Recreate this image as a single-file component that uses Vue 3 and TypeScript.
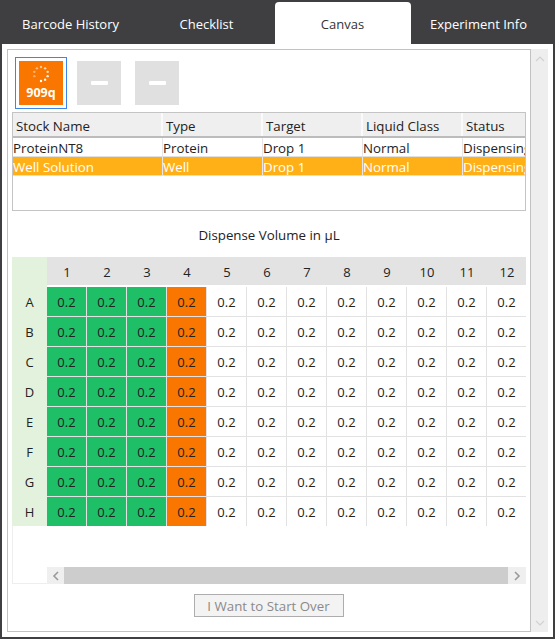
<script setup lang="ts">
const tabs = ['Barcode History', 'Checklist', 'Canvas', 'Experiment Info']
const columns = ['Stock Name', 'Type', 'Target', 'Liquid Class', 'Status']
const rows = [
  { cells: ['ProteinNT8', 'Protein', 'Drop 1', 'Normal', 'Dispensing'], selected: false },
  { cells: ['Well Solution', 'Well', 'Drop 1', 'Normal', 'Dispensing'], selected: true },
]
const gridCols = Array.from({ length: 12 }, (_, i) => i + 1)
const gridRows = ['A', 'B', 'C', 'D', 'E', 'F', 'G', 'H']
const opacities = [0.6, 0.7, 0.8, 0.9, 1, 1, 0, 0.4, 0.45, 0.5]
const dots = opacities.map((o, i) => {
  const a = (i / 10) * Math.PI * 2 - Math.PI / 2
  return { x: 22 + 7 * Math.cos(a), y: 13 + 7 * Math.sin(a), o }
})
function cellClass(c: number): string {
  if (c <= 3) return 'green'
  if (c === 4) return 'orange'
  return ''
}
</script>

<template>
  <div class="window">
    <nav class="tabs">
      <div v-for="t in tabs" :key="t" class="tab" :class="{ active: t === 'Canvas' }">{{ t }}</div>
    </nav>
    <div class="content">
      <section class="panel">
        <div class="toolbar">
          <div class="tool selected">
            <div class="tile orange-tile">
              <svg class="spinner" viewBox="0 0 44 44" width="44" height="44">
                <circle v-for="(d, i) in dots" :key="i" :cx="d.x" :cy="d.y" r="1.2" fill="#fff" :opacity="d.o" />
              </svg>
              <span class="tile-text">909q</span>
            </div>
          </div>
          <div class="tool"><div class="tile grey-tile"><i class="dash"></i></div></div>
          <div class="tool"><div class="tile grey-tile"><i class="dash"></i></div></div>
        </div>

        <div class="table">
          <div class="thead">
            <div v-for="c in columns" :key="c" class="th">{{ c }}</div>
          </div>
          <div v-for="r in rows" :key="r.cells[0]" class="tr" :class="{ sel: r.selected }">
            <div v-for="(c, i) in r.cells" :key="i" class="td">{{ c }}</div>
          </div>
        </div>

        <h2 class="title">Dispense Volume in µL</h2>

        <div class="plate">
          <div class="plate-grid">
            <div class="corner"></div>
            <div v-for="c in gridCols" :key="c" class="col-head">{{ c }}</div>
            <template v-for="r in gridRows" :key="r">
              <div class="row-head">{{ r }}</div>
              <div v-for="c in gridCols" :key="c" class="cell" :class="cellClass(c)">0.2</div>
            </template>
          </div>
          <div class="plate-foot">
            <div class="hscroll">
              <span class="arrow">
                <svg width="8" height="10" viewBox="0 0 8 10"><path d="M6 1 2 5l4 4" fill="none" stroke="#9a9a9a" stroke-width="1.6" /></svg>
              </span>
              <span class="thumb"></span>
              <span class="arrow">
                <svg width="8" height="10" viewBox="0 0 8 10"><path d="M2 1l4 4-4 4" fill="none" stroke="#9a9a9a" stroke-width="1.6" /></svg>
              </span>
            </div>
          </div>
        </div>

        <div class="actions">
          <button class="start" type="button" disabled>I Want to Start Over</button>
        </div>
      </section>
      <aside class="vscroll">
        <svg width="10" height="8" viewBox="0 0 10 8"><path d="M1 6l4-4 4 4" fill="none" stroke="#d2d2d2" stroke-width="1.2" /></svg>
        <svg width="10" height="8" viewBox="0 0 10 8"><path d="M1 2l4 4 4-4" fill="none" stroke="#d2d2d2" stroke-width="1.2" /></svg>
      </aside>
    </div>
  </div>
</template>

<style>
html, body { margin: 0; padding: 0; background: #3f3f41; }
</style>

<style scoped>
* { box-sizing: border-box; }
.window {
  width: 555px;
  height: 639px;
  background: #3f3f41;
  font-family: "Open Sans", "Noto Sans", sans-serif;
  font-size: 13px;
  color: #222;
  overflow: hidden;
}
.tabs {
  display: flex;
  height: 44px;
  padding: 2px 0 0 3px;
}
.tab {
  width: 136px;
  display: flex;
  align-items: center;
  justify-content: center;
  color: #fff;
  padding: 2px 1px 0 0;
}
.tab.active {
  background: #fff;
  color: #333;
  border-radius: 4px 4px 0 0;
}
.content {
  display: flex;
  align-items: flex-start;
  width: 551px;
  height: 593px;
  margin-left: 2px;
  padding: 5px;
  background: #fff;
}
.panel {
  width: 524px;
  height: 583px;
  border: 1px solid #c2c2c2;
  padding: 7px 4px 0;
  display: flex;
  flex-direction: column;
}
.vscroll {
  width: 17px;
  height: 583px;
  background: #eeeeee;
  display: flex;
  flex-direction: column;
  justify-content: space-between;
  align-items: center;
  padding: 6px 0 5px;
}
.toolbar {
  display: flex;
  gap: 6px;
  padding-left: 3px;
  margin-bottom: 3px;
}
.tool {
  width: 52px;
  height: 52px;
  padding: 3px;
  border: 1px solid transparent;
}
.tool.selected { border-color: #3b86e8; }
.tile {
  position: relative;
  width: 44px;
  height: 44px;
  display: flex;
  align-items: center;
  justify-content: center;
}
.orange-tile { background: #f97600; }
.grey-tile { background: #e0e0e0; }
.spinner { position: absolute; inset: 0; }
.tile-text {
  position: absolute;
  left: 0;
  right: 0;
  bottom: 4px;
  text-align: center;
  color: #fff;
  font-weight: 700;
  font-size: 12.5px;
  line-height: 16px;
}
.dash {
  display: block;
  width: 17px;
  height: 4px;
  background: #fff;
  border-radius: 1px;
}
.table {
  width: 514px;
  height: 99px;
  border: 1px solid #c4c4c4;
  overflow: hidden;
  flex: none;
  font-size: 13.3px;
}
.thead {
  display: flex;
  height: 25px;
  background: #efefef;
  border-bottom: 2px solid #bcbcbc;
}
.th {
  flex: none;
  width: 100px;
  padding: 1px 3px 0;
  border-right: 2px solid #fafafa;
  line-height: 25px;
  white-space: nowrap;
}
.th:first-child, .td:first-child { width: 150px; }
.tr {
  display: flex;
  height: 19px;
  border-bottom: 1px solid #e0e0e0;
}
.tr.sel { background: #ffb017; color: #fff; }
.td {
  flex: none;
  width: 100px;
  padding: 1px 0 0;
  border-right: 1px solid #e6e6e6;
  line-height: 18px;
  white-space: nowrap;
}
.title {
  margin: 13px 0 0;
  height: 33px;
  text-align: center;
  font-size: 13.3px;
  font-weight: 400;
  line-height: 22px;
}
.plate {
  width: 514px;
  height: 327px;
  overflow: hidden;
  flex: none;
}
.plate-grid {
  display: grid;
  grid-template-columns: 35px repeat(12, 40px);
  grid-template-rows: repeat(8, 30px) 29px;
  width: 515px;
}
.corner, .row-head { background: #e3f2dc; }
.row-head, .col-head, .cell {
  display: flex;
  align-items: center;
  justify-content: center;
}
.col-head { background: #e3e3e3; border-bottom: 2px solid #fff; padding-top: 2px; }
.cell {
  background: #fff;
  border-right: 1px solid #e2e2e2;
  border-bottom: 1px solid #e2e2e2;
  color: #222;
}
.cell:nth-last-child(-n + 12) { border-bottom: none; }
.cell.green { background: #1fbf68; }
.cell.orange { background: #f97600; }
.plate-foot {
  height: 58px;
  border-left: 1px solid #eeeeee;
  border-bottom: 1px solid #eeeeee;
  padding: 41px 0 0 34px;
}
.hscroll {
  display: flex;
  height: 17px;
  width: 479px;
}
.arrow {
  width: 17px;
  flex: none;
  background: #efefef;
  display: flex;
  align-items: center;
  justify-content: center;
}
.arrow:last-child { width: 18px; }
.thumb { flex: 1; background: #cdcdcd; }
.actions {
  display: flex;
  justify-content: center;
  padding: 10px 1px 0 0;
}
.start {
  width: 150px;
  height: 23px;
  background: #f3f3f3;
  border: 1px solid #adadad;
  color: #8a8a8a;
  font: inherit;
  font-size: 13.3px;
  padding: 0;
}
</style>
